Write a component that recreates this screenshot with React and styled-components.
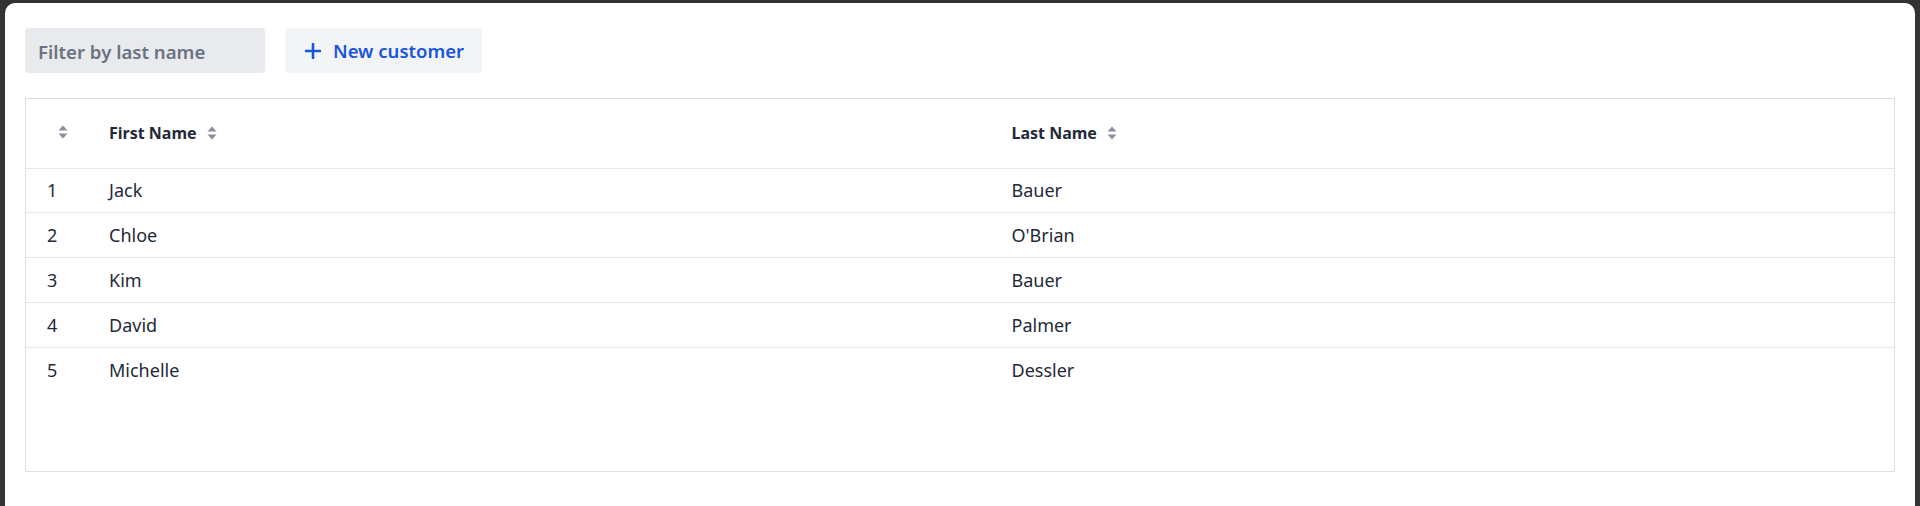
import React from "react";
import styled, { createGlobalStyle } from "styled-components";

const Global = createGlobalStyle`
  html, body {
    margin: 0;
    padding: 0;
    background: #333333;
    font-family: "Noto Sans", "Open Sans", sans-serif;
  }
  * { box-sizing: border-box; }
`;

const Panel = styled.div`
  margin: 3px 5px 0 5px;
  background: #ffffff;
  border-radius: 10px 10px 0 0;
  min-height: 503px;
  padding: 25px 20px;
`;

const Toolbar = styled.div`
  display: flex;
  align-items: center;
  gap: 20px;
`;

const FilterInput = styled.input`
  width: 240px;
  height: 45px;
  border: none;
  outline: none;
  border-radius: 4px;
  background: #e8eaee;
  padding: 1px 13px 0;
  font-family: inherit;
  font-size: 18.6px;
  font-weight: 600;
  color: #374151;
  &::placeholder {
    color: #6b7280;
  }
`;

const NewButton = styled.button`
  display: flex;
  align-items: center;
  gap: 12px;
  height: 45px;
  padding: 0 18px 0 20px;
  border: none;
  border-radius: 4px;
  background: #f3f4f6;
  color: #1a56db;
  font-family: inherit;
  font-size: 18.5px;
  font-weight: 600;
  cursor: pointer;
`;

const TableBox = styled.div`
  margin-top: 25px;
  height: 374px;
  border: 1px solid #dedde4;
`;

const Table = styled.table`
  width: 100%;
  border-collapse: collapse;
  table-layout: fixed;
`;

const HeadCell = styled.th`
  height: 69px;
  padding: 0 20px;
  text-align: left;
  font-size: 16px;
  font-weight: 700;
  color: #1f2937;
  border-bottom: 1px solid #e5e7eb;
  width: ${(p) => p.$w || "auto"};
`;

const HeadInner = styled.span`
  display: inline-flex;
  align-items: center;
  gap: 10px;
  padding-left: ${(p) => (p.$empty ? "12px" : "0")};
`;

const Row = styled.tr`
  & + & td {
    border-top: 1px solid #e5e7eb;
  }
`;

const Cell = styled.td`
  height: 44.8px;
  padding: 0 20px;
  font-size: 18px;
  color: #1f2937;
  padding-left: ${(p) => (p.$num ? "21px" : "20px")};
`;

const SortIcon = () => (
  <svg width="10" height="14" viewBox="0 0 10 14">
    <path d="M5 0.5 L9.5 5.5 H0.5 Z" fill="#8a8f9a" />
    <path d="M5 13.5 L9.5 8.5 H0.5 Z" fill="#8a8f9a" />
  </svg>
);

const PlusIcon = () => (
  <svg width="16" height="16" viewBox="0 0 16 16">
    <path d="M8 1 V15 M1 8 H15" stroke="#1a56db" strokeWidth="2.6" strokeLinecap="round" />
  </svg>
);

const customers = [
  { id: 1, first: "Jack", last: "Bauer" },
  { id: 2, first: "Chloe", last: "O'Brian" },
  { id: 3, first: "Kim", last: "Bauer" },
  { id: 4, first: "David", last: "Palmer" },
  { id: 5, first: "Michelle", last: "Dessler" },
];

export default function App() {
  return (
    <>
      <Global />
      <Panel>
        <Toolbar>
          <FilterInput placeholder="Filter by last name" />
          <NewButton>
            <PlusIcon />
            New customer
          </NewButton>
        </Toolbar>
        <TableBox>
          <Table>
            <thead>
              <tr>
                <HeadCell $w="63px">
                  <HeadInner $empty>
                    <SortIcon />
                  </HeadInner>
                </HeadCell>
                <HeadCell>
                  <HeadInner>
                    First Name <SortIcon />
                  </HeadInner>
                </HeadCell>
                <HeadCell>
                  <HeadInner>
                    Last Name <SortIcon />
                  </HeadInner>
                </HeadCell>
              </tr>
            </thead>
            <tbody>
              {customers.map((c) => (
                <Row key={c.id}>
                  <Cell $num>{c.id}</Cell>
                  <Cell>{c.first}</Cell>
                  <Cell>{c.last}</Cell>
                </Row>
              ))}
            </tbody>
          </Table>
        </TableBox>
      </Panel>
    </>
  );
}
